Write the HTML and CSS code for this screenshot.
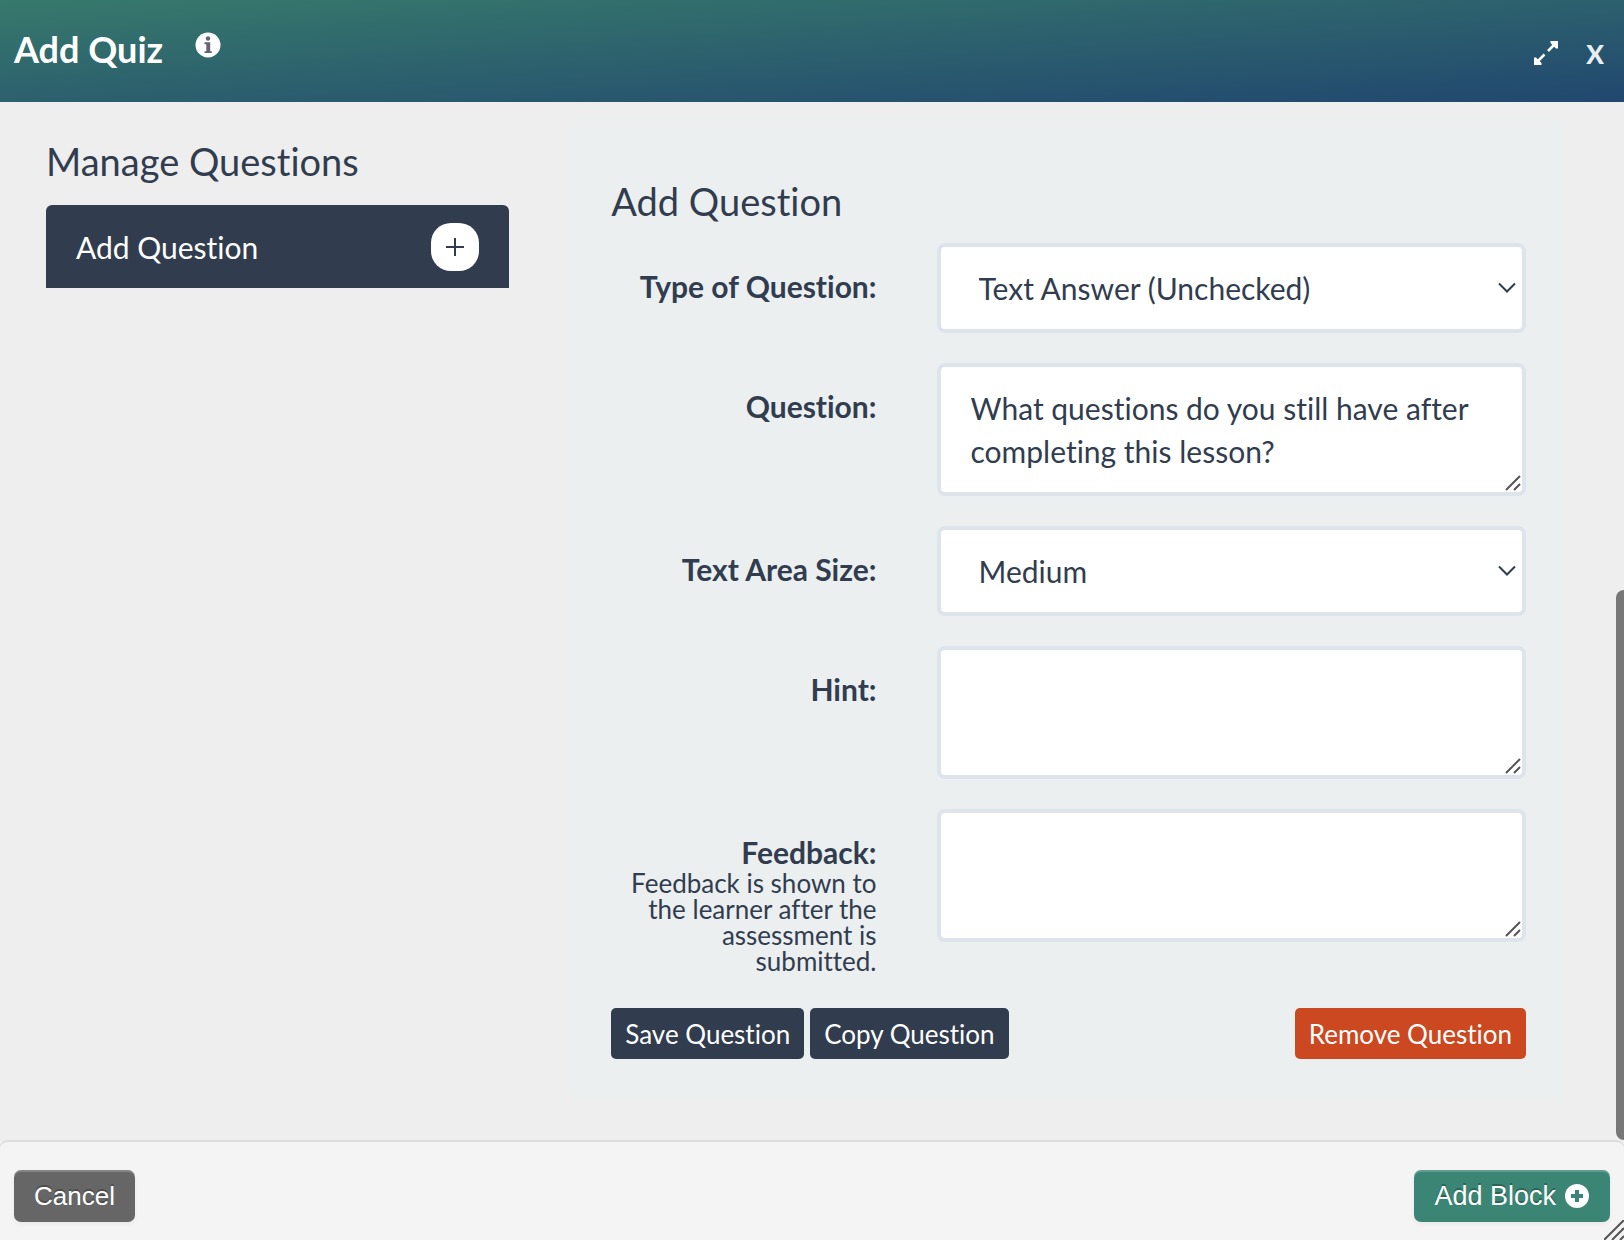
FILE: index.html
```
<!DOCTYPE html>
<html lang="en">
<head>
<meta charset="utf-8">
<title>Add Quiz</title>
<link rel="stylesheet" href="styles.css">
</head>
<body>
<header class="modal-header">
  <h1 class="modal-title">Add Quiz</h1>
  <button class="icon-button info" type="button" aria-label="Information">
    <svg width="26" height="26" viewBox="0 0 26 26"><circle cx="13" cy="13" r="12.5" fill="#fff"/><g fill="#666470"><circle cx="13" cy="6.500" r="2.200"/><path d="M9.500 10.300h5.700v8.900h1.600v1.900H9.500v-1.900h1.800v-7H9.500z"/></g></svg>
  </button>
  <div class="window-actions">
    <button class="icon-button" type="button" aria-label="Expand">
      <svg width="24" height="24" viewBox="0 0 24 24" fill="#fff" stroke="#fff" stroke-width="2.500"><path d="M14 10L21 3M3 21L10.500 13.500"/><path stroke="none" d="M16.500 0H24V7.500L22 7.500L16.500 2ZM0 16.500V24H7.500V22L2 16.500Z"/></svg>
    </button>
    <button class="icon-button close" type="button" aria-label="Close">X</button>
  </div>
</header>

<main class="modal-body">
  <section class="sidebar">
    <h2 class="heading">Manage Questions</h2>
    <div class="add-card">
      <span>Add Question</span>
      <button class="plus" type="button" aria-label="Add Question">
        <svg width="18" height="18" viewBox="0 0 18 18" stroke="#313d4f" stroke-width="2"><path d="M9 0V18M0 9H18"/></svg>
      </button>
    </div>
  </section>

  <form class="panel">
    <h2 class="heading">Add Question</h2>
    <div class="fields">
      <label class="label" for="type">Type of Question:</label>
      <div class="control">
        <select class="input select" id="type"><option>Text Answer (Unchecked)</option></select>
        <svg class="chevron" width="18" height="12" viewBox="0 0 18 12"><path d="M1 1.500L9 9.500L17 1.500"/></svg>
      </div>

      <label class="label" for="question">Question:</label>
      <div class="control">
        <textarea class="input textarea" id="question">What questions do you still have after completing this lesson?</textarea>
        <svg class="grip" width="16" height="16" viewBox="0 0 16 16"><path d="M1 15L15 1M9 15L15 9"/></svg>
      </div>

      <label class="label" for="size">Text Area Size:</label>
      <div class="control">
        <select class="input select" id="size"><option>Medium</option></select>
        <svg class="chevron" width="18" height="12" viewBox="0 0 18 12"><path d="M1 1.500L9 9.500L17 1.500"/></svg>
      </div>

      <label class="label" for="hint">Hint:</label>
      <div class="control">
        <textarea class="input textarea" id="hint"></textarea>
        <svg class="grip" width="16" height="16" viewBox="0 0 16 16"><path d="M1 15L15 1M9 15L15 9"/></svg>
      </div>

      <div class="label">
        <label for="feedback">Feedback:</label>
        <p class="help">Feedback is shown to the learner after the assessment is submitted.</p>
      </div>
      <div class="control">
        <textarea class="input textarea" id="feedback"></textarea>
        <svg class="grip" width="16" height="16" viewBox="0 0 16 16"><path d="M1 15L15 1M9 15L15 9"/></svg>
      </div>
    </div>
    <div class="panel-actions">
      <button class="button" type="button">Save Question</button>
      <button class="button" type="button">Copy Question</button>
      <button class="button danger" type="button">Remove Question</button>
    </div>
  </form>
  <div class="scroll-thumb"></div>
</main>

<footer class="modal-footer">
  <button class="footer-button cancel" type="button">Cancel</button>
  <button class="footer-button submit" type="button">Add Block
    <svg width="26" height="26" viewBox="0 0 26 26"><circle cx="13" cy="13" r="12" fill="#fff"/><path d="M13 7V19M7 13H19" stroke="#3b8574" stroke-width="4"/></svg>
  </button>
  <svg class="corner" width="20" height="20" viewBox="0 0 20 20"><path d="M0 20L20 0M8 20L20 8M16 20L20 16"/></svg>
</footer>
</body>
</html>
```

FILE: styles.css
```
* {
  box-sizing: border-box;
}

body {
  margin: 0;
  min-height: 100vh;
  display: flex;
  flex-direction: column;
  background: #eee;
  color: #313d4f;
  font: 30px/36px Lato, "Open Sans", sans-serif;
  font-variant-ligatures: none;
}

button,
select,
textarea {
  font: inherit;
  font-variant-ligatures: none;
  color: inherit;
}

/* Header */
.modal-header {
  display: flex;
  align-items: center;
  height: 102px;
  padding: 0 14px;
  background: linear-gradient(to bottom right, #37796c, #21476f);
  color: #fff;
}

.modal-title {
  margin: 0;
  padding-bottom: 4px;
  font-size: 36px;
  line-height: 44px;
  font-weight: 700;
}

.icon-button {
  display: flex;
  padding: 0;
  border: 0;
  background: none;
  color: #fff;
}

.info {
  margin: 0 0 12px 32px;
}

.window-actions {
  display: flex;
  align-items: center;
  gap: 28px;
  margin-left: auto;
  padding: 4px 6px 0 0;
}

.close {
  padding-top: 2px;
  color: #e9eef2;
  font-size: 26px;
  line-height: 28px;
  font-weight: 900;
}

/* Body */
.modal-body {
  position: relative;
  flex: 1;
  display: grid;
  grid-template-columns: 7fr 15fr;
  align-items: start;
  gap: 63px;
  padding: 18px 59px 38px 46px;
}

.heading {
  margin: 0;
  font-size: 38px;
  line-height: 46px;
  font-weight: 400;
}

.sidebar {
  display: grid;
  gap: 21px;
  padding-top: 18px;
}

.add-card {
  display: flex;
  align-items: center;
  justify-content: space-between;
  height: 83px;
  padding: 0 30px;
  border-radius: 6px 6px 0 0;
  background: #313d4f;
  color: #fff;
}

.plus {
  display: grid;
  place-items: center;
  width: 48px;
  height: 48px;
  padding: 0;
  border: 0;
  border-radius: 20px;
  background: #fff;
}

.panel {
  padding: 58px 39px 40px;
  border-radius: 8px;
  background: #ebeff0;
}

.fields {
  display: grid;
  grid-template-columns: 9fr 20fr;
  gap: 30px 60px;
  margin-top: 19px;
}

.label {
  padding-top: 25px;
  font-weight: 700;
  line-height: 36px;
  text-align: right;
}

.label label {
  display: block;
}

.help {
  margin: 0;
  font-size: 26px;
  line-height: 26px;
  font-weight: 400;
}

.control {
  position: relative;
  align-self: start;
}

.input {
  display: block;
  width: 100%;
  border: 4px solid #dde4ec;
  border-radius: 8px;
  background: #fff;
}

.select {
  height: 90px;
  padding: 0 38px;
  appearance: none;
}

.textarea {
  height: 133px;
  padding: 20px 30px;
  line-height: 43px;
  overflow: hidden;
  resize: none;
}

.chevron,
.grip,
.corner {
  position: absolute;
  fill: none;
  stroke: #313d4f;
  stroke-width: 2;
  pointer-events: none;
}

.chevron {
  top: 39px;
  right: 10px;
}

.grip {
  right: 5px;
  bottom: 5px;
  stroke: #555;
}

.panel-actions {
  display: flex;
  gap: 6px;
  margin-top: 34px;
}

.button {
  height: 51px;
  padding: 0 14px;
  border: 0;
  border-radius: 5px;
  background: #313d4f;
  color: #fff;
  font-size: 26px;
}

.danger {
  margin-left: auto;
  background: #cb4820;
}

.scroll-thumb {
  position: absolute;
  right: 0;
  bottom: 0;
  width: 8px;
  height: 53%;
  border-radius: 8px 0 0 8px;
  background: #777;
}

/* Footer */
.modal-footer {
  position: relative;
  display: flex;
  align-items: center;
  justify-content: space-between;
  padding: 28px 14px 18px;
  border-top: 2px solid #ddd;
  border-radius: 8px 8px 0 0;
  background: #f4f4f4;
}

.footer-button {
  display: flex;
  align-items: center;
  gap: 8px;
  height: 52px;
  padding: 0 20px;
  border: 0;
  border-radius: 7px;
  box-shadow: inset 0 2px rgba(255, 255, 255, 0.2), 0 2px 4px rgba(0, 0, 0, 0.05);
  color: #fff;
  font: 26px/30px "Liberation Sans", Arial, sans-serif;
  text-shadow: 0 -2px rgba(0, 0, 0, 0.25);
}

.cancel {
  background: #666;
}

.submit {
  background: #3b8574;
  font-size: 27px;
}

.corner {
  right: 0;
  bottom: 0;
  stroke: #555;
}
```
